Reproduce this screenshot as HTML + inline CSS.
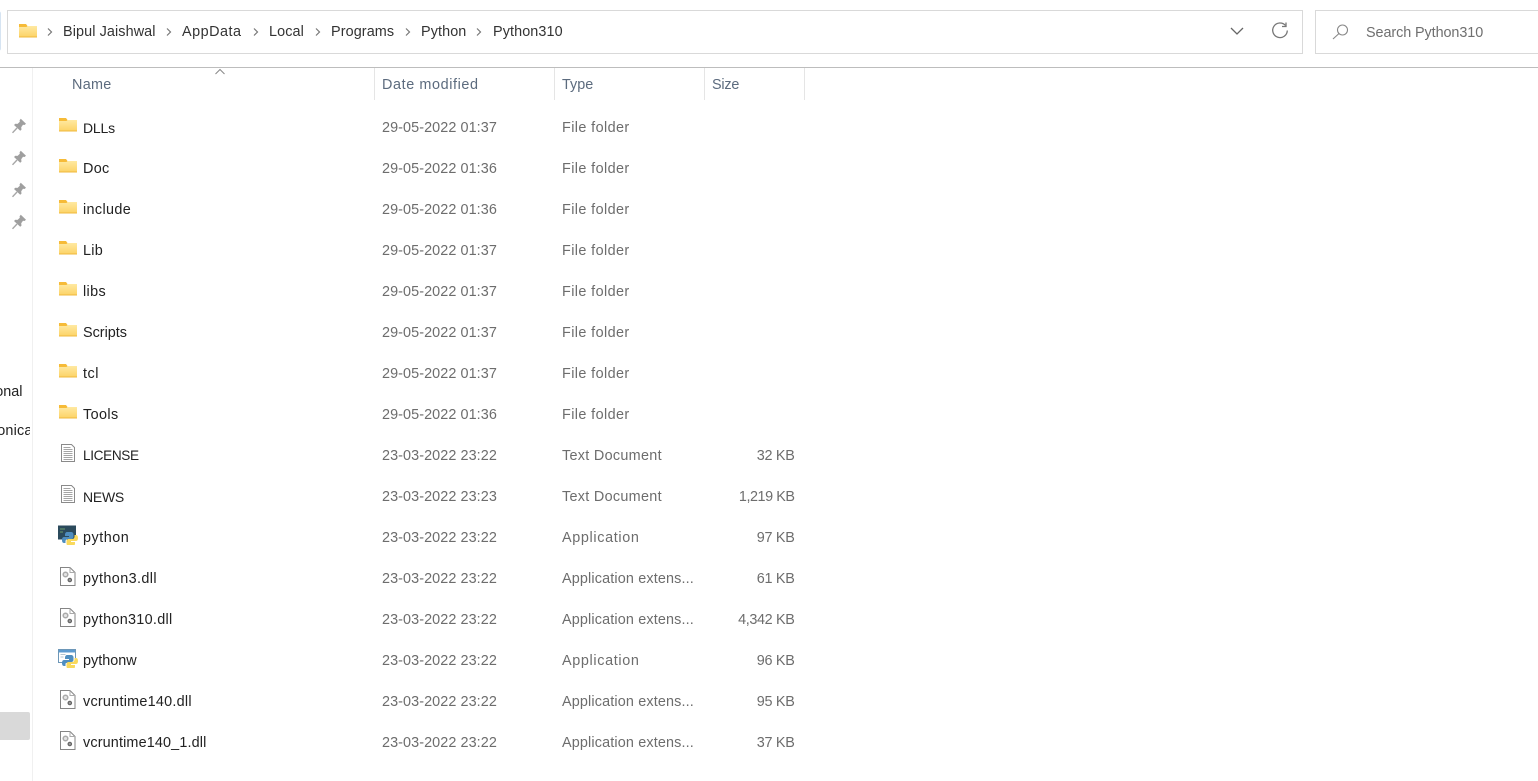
<!DOCTYPE html>
<html><head><meta charset="utf-8">
<style>
html,body{margin:0;padding:0;background:#fff;width:1538px;height:781px;overflow:hidden}
body{position:relative;font-family:"Liberation Sans",sans-serif;font-size:14.4px;color:#1b1b1b}
.a{position:absolute;white-space:nowrap;line-height:18px}
.n{left:83px;color:#222;margin-top:1px}
.d{left:382px;color:#6d6d6d;letter-spacing:.08px;margin-top:1px}
.t{left:562px;color:#6d6d6d;margin-top:1px}
.ff{letter-spacing:.4px}.td{letter-spacing:.3px}.ap{letter-spacing:.65px}.ae{letter-spacing:.15px}
.s{right:743.500px;color:#6d6d6d;letter-spacing:-.3px;margin-top:1px}
.h{top:76px;color:#5c6b7e;letter-spacing:.3px}
.b{top:23px;color:#333;letter-spacing:.1px}
.v{position:absolute;top:68px;width:1px;height:32px;background:#e5e5e5}
svg{position:absolute;overflow:visible}
.i{left:58px;width:20px;height:20px}
</style></head><body>
<svg width="0" height="0" style="left:0;top:0">
<defs>
<linearGradient id="fg" x1="0" y1="0" x2="0" y2="1"><stop offset="0" stop-color="#ffe9a2"/><stop offset="1" stop-color="#fcd264"/></linearGradient>
<symbol id="folder" viewBox="0 0 20 20"><path d="M1 3h7l1.500 2H19V16.500H1z" fill="#f6bb38"/><path d="M1 6H8.500l1-1H19V16.500H1z" fill="url(#fg)"/><path d="M1 15.500h18v1H1z" fill="#efb83c"/></symbol>
<symbol id="txt" viewBox="0 0 20 20"><path d="M3.500 1.500h10l3 3V18.500H3.500z" fill="#fff" stroke="#8a8a8a"/><path d="M5.500 4.500h7M5.500 6.500h9M5.500 8.500h9M5.500 10.500h9M5.500 12.500h9M5.500 14.500h9M5.500 16.500h9" stroke="#a5a5a5" stroke-width="1"/></symbol>
<symbol id="dll" viewBox="0 0 20 20"><path d="M2.500 1.500h9.500l5 5V19.500H2.500z" fill="#fff" stroke="#858585"/><path d="M12 1.500V6.500h5" fill="none" stroke="#aaa"/><circle cx="7.500" cy="8.500" r="2.300" fill="#e4e4e4" stroke="#aaa" stroke-width="1.500"/><circle cx="11.800" cy="14" r="1.700" fill="#999" stroke="#666" stroke-width="1.200"/></symbol>
<symbol id="py" viewBox="0 0 20 20"><path d="M0 .5h18v14H0z" fill="#2b4a5c"/><path d="M2 4h5M2 7h3" stroke="#6d9d6d" stroke-width="1"/><path d="M9 7h4c1.500 0 2.500 1 2.500 2.500V12c0 1-1 2-2 2H10c-1.500 0-2.500 1-2.500 2.500V18H6c-1.500 0-2-1.500-2-3s.5-3 2-3h5v-1H7V9.500C7 8 8 7 9 7z" fill="#4f8ec0"/><path transform="rotate(180 12 14)" d="M9 7h4c1.500 0 2.500 1 2.500 2.500V12c0 1-1 2-2 2H10c-1.500 0-2.500 1-2.500 2.500V18H6c-1.500 0-2-1.500-2-3s.5-3 2-3h5v-1H7V9.500C7 8 8 7 9 7z" fill="#f9d95c"/></symbol>
<symbol id="pyw" viewBox="0 0 20 20"><path d="M.5 1.500h17v13H.5z" fill="#fff" stroke="#6d97b8"/><path d="M1 2h16v2.500H1z" fill="#5d9bd0"/><path d="M2.500 6.500h5M2.500 9h3" stroke="#b5c5d0" stroke-width="1"/><path d="M9 7h4c1.500 0 2.500 1 2.500 2.500V12c0 1-1 2-2 2H10c-1.500 0-2.500 1-2.500 2.500V18H6c-1.500 0-2-1.500-2-3s.5-3 2-3h5v-1H7V9.500C7 8 8 7 9 7z" fill="#4f8ec0"/><path transform="rotate(180 12 14)" d="M9 7h4c1.500 0 2.500 1 2.500 2.500V12c0 1-1 2-2 2H10c-1.500 0-2.500 1-2.500 2.500V18H6c-1.500 0-2-1.500-2-3s.5-3 2-3h5v-1H7V9.500C7 8 8 7 9 7z" fill="#f9d95c"/></symbol>
<symbol id="pin" viewBox="0 0 16 16"><path d="M9.800 .8L15 5.800 13.500 7l-1.500-.2-1.800 2.500.3 2.300-1.300 1.200L3 7l1.300-1.300 2.300.2 2.200-2.100-.2-1.500z" fill="#9f9f9f"/><path d="M6 10L1.500 14.800" stroke="#a6a6a6" stroke-width="1.400"/></symbol>
<symbol id="chev" viewBox="0 0 8 12"><path d="M2 2.500l3.500 3.500-3.500 3.500" fill="none" stroke="#777" stroke-width="1.200"/></symbol>
</defs></svg>

<!-- Address bar -->
<div style="position:absolute;left:-4px;top:11px;width:5px;height:40px;border:1px solid #d6e4f2;border-radius:3px;box-sizing:border-box"></div>
<div style="position:absolute;left:7px;top:10px;width:1296px;height:44px;border:1px solid #d9d9d9;box-sizing:border-box"></div>
<div style="position:absolute;left:1315px;top:10px;width:240px;height:44px;border:1px solid #d9d9d9;box-sizing:border-box"></div>
<div style="position:absolute;left:0;top:67px;width:1538px;height:1px;background:#bdbdbd"></div>

<svg style="left:18px;top:21px;width:20px;height:20px"><use href="#folder" width="20" height="20"/></svg>
<svg style="left:46px;top:26px;width:8px;height:12px"><use href="#chev" width="8" height="12"/></svg>
<div class="a b" style="left:63px">Bipul Jaishwal</div>
<svg style="left:165px;top:26px;width:8px;height:12px"><use href="#chev" width="8" height="12"/></svg>
<div class="a b" style="left:182px;letter-spacing:.5px">AppData</div>
<svg style="left:252px;top:26px;width:8px;height:12px"><use href="#chev" width="8" height="12"/></svg>
<div class="a b" style="left:269px">Local</div>
<svg style="left:314px;top:26px;width:8px;height:12px"><use href="#chev" width="8" height="12"/></svg>
<div class="a b" style="left:331px">Programs</div>
<svg style="left:404px;top:26px;width:8px;height:12px"><use href="#chev" width="8" height="12"/></svg>
<div class="a b" style="left:421px">Python</div>
<svg style="left:475px;top:26px;width:8px;height:12px"><use href="#chev" width="8" height="12"/></svg>
<div class="a b" style="left:493px">Python310</div>

<svg style="left:1229px;top:25px;width:16px;height:12px"><path d="M2 3l6 6 6-6" fill="none" stroke="#666" stroke-width="1.300"/></svg>
<svg style="left:1271px;top:22px;width:18px;height:18px"><path d="M14.500 3.500A7.300 7.300 0 1 0 16.300 8.500" fill="none" stroke="#777" stroke-width="1.300"/><path d="M15 .5V4.500H11" fill="none" stroke="#777" stroke-width="1.300"/></svg>
<svg style="left:1332px;top:23px;width:18px;height:18px"><circle cx="10.500" cy="7" r="5" fill="none" stroke="#888" stroke-width="1.100"/><path d="M7 10.500L1 16" stroke="#888" stroke-width="1.100"/></svg>
<div class="a" style="left:1366px;top:24px;color:#6f6f6f;letter-spacing:-.08px">Search Python310</div>

<!-- Left pane -->
<div style="position:absolute;left:32px;top:68px;width:1px;height:713px;background:#f0f0f0"></div>
<svg style="left:11px;top:118px;width:16px;height:16px"><use href="#pin" width="16" height="16"/></svg>
<svg style="left:11px;top:150px;width:16px;height:16px"><use href="#pin" width="16" height="16"/></svg>
<svg style="left:11px;top:182px;width:16px;height:16px"><use href="#pin" width="16" height="16"/></svg>
<svg style="left:11px;top:214px;width:16px;height:16px"><use href="#pin" width="16" height="16"/></svg>
<div class="a" style="left:-8px;top:383px;color:#222">ional</div>
<div style="position:absolute;left:0;top:422px;width:30px;height:20px;overflow:hidden"><div class="a" style="left:-12px;top:0;color:#222;letter-spacing:.2px">tronica</div></div>
<div style="position:absolute;left:0;top:712px;width:30px;height:28px;background:#d9d9d9;border-radius:0 2px 2px 0"></div>

<!-- Header -->
<div class="a h" style="left:72px">Name</div>
<svg style="left:214px;top:68px;width:12px;height:7px"><path d="M1.500 6L6 1.500 10.500 6" fill="none" stroke="#888" stroke-width="1"/></svg>
<div class="v" style="left:374px"></div>
<div class="a h" style="left:382px;letter-spacing:.6px">Date modified</div>
<div class="v" style="left:554px"></div>
<div class="a h" style="left:562px;letter-spacing:0">Type</div>
<div class="v" style="left:704px"></div>
<div class="a h" style="left:712px;letter-spacing:-.2px">Size</div>
<div class="v" style="left:804px"></div>

<!-- Rows -->
<svg class="i" style="top:115px"><use href="#folder" width="20" height="20"/></svg><div class="a n" style="top:118px;font-size:14px;letter-spacing:-.2px">DLLs</div><div class="a d" style="top:118px">29-05-2022 01:37</div><div class="a t ff" style="top:118px">File folder</div>
<svg class="i" style="top:156px"><use href="#folder" width="20" height="20"/></svg><div class="a n" style="top:159px;letter-spacing:.3px">Doc</div><div class="a d" style="top:159px">29-05-2022 01:36</div><div class="a t ff" style="top:159px">File folder</div>
<svg class="i" style="top:197px"><use href="#folder" width="20" height="20"/></svg><div class="a n" style="top:200px;letter-spacing:.35px">include</div><div class="a d" style="top:200px">29-05-2022 01:36</div><div class="a t ff" style="top:200px">File folder</div>
<svg class="i" style="top:238px"><use href="#folder" width="20" height="20"/></svg><div class="a n" style="top:241px;letter-spacing:.3px">Lib</div><div class="a d" style="top:241px">29-05-2022 01:37</div><div class="a t ff" style="top:241px">File folder</div>
<svg class="i" style="top:279px"><use href="#folder" width="20" height="20"/></svg><div class="a n" style="top:282px;letter-spacing:.35px">libs</div><div class="a d" style="top:282px">29-05-2022 01:37</div><div class="a t ff" style="top:282px">File folder</div>
<svg class="i" style="top:320px"><use href="#folder" width="20" height="20"/></svg><div class="a n" style="top:323px">Scripts</div><div class="a d" style="top:323px">29-05-2022 01:37</div><div class="a t ff" style="top:323px">File folder</div>
<svg class="i" style="top:361px"><use href="#folder" width="20" height="20"/></svg><div class="a n" style="top:364px;letter-spacing:.5px">tcl</div><div class="a d" style="top:364px">29-05-2022 01:37</div><div class="a t ff" style="top:364px">File folder</div>
<svg class="i" style="top:402px"><use href="#folder" width="20" height="20"/></svg><div class="a n" style="top:405px;letter-spacing:.4px">Tools</div><div class="a d" style="top:405px">29-05-2022 01:36</div><div class="a t ff" style="top:405px">File folder</div>
<svg class="i" style="top:443px"><use href="#txt" width="20" height="20"/></svg><div class="a n" style="top:446px;font-size:13.6px;letter-spacing:-.35px">LICENSE</div><div class="a d" style="top:446px">23-03-2022 23:22</div><div class="a t td" style="top:446px">Text Document</div><div class="a s" style="top:446px">32 KB</div>
<svg class="i" style="top:484px"><use href="#txt" width="20" height="20"/></svg><div class="a n" style="top:487px;font-size:14px;letter-spacing:-.25px">NEWS</div><div class="a d" style="top:487px">23-03-2022 23:23</div><div class="a t td" style="top:487px">Text Document</div><div class="a s" style="top:487px;letter-spacing:-.45px">1,219 KB</div>
<svg class="i" style="top:525px"><use href="#py" width="20" height="20"/></svg><div class="a n" style="top:528px;letter-spacing:.5px">python</div><div class="a d" style="top:528px">23-03-2022 23:22</div><div class="a t ap" style="top:528px">Application</div><div class="a s" style="top:528px">97 KB</div>
<svg class="i" style="top:566px"><use href="#dll" width="20" height="20"/></svg><div class="a n" style="top:569px;letter-spacing:.4px">python3.dll</div><div class="a d" style="top:569px">23-03-2022 23:22</div><div class="a t ae" style="top:569px">Application extens...</div><div class="a s" style="top:569px">61 KB</div>
<svg class="i" style="top:607px"><use href="#dll" width="20" height="20"/></svg><div class="a n" style="top:610px;letter-spacing:.3px">python310.dll</div><div class="a d" style="top:610px">23-03-2022 23:22</div><div class="a t ae" style="top:610px">Application extens...</div><div class="a s" style="top:610px;letter-spacing:-.35px">4,342 KB</div>
<svg class="i" style="top:648px"><use href="#pyw" width="20" height="20"/></svg><div class="a n" style="top:651px">pythonw</div><div class="a d" style="top:651px">23-03-2022 23:22</div><div class="a t ap" style="top:651px">Application</div><div class="a s" style="top:651px">96 KB</div>
<svg class="i" style="top:689px"><use href="#dll" width="20" height="20"/></svg><div class="a n" style="top:692px;letter-spacing:.25px">vcruntime140.dll</div><div class="a d" style="top:692px">23-03-2022 23:22</div><div class="a t ae" style="top:692px">Application extens...</div><div class="a s" style="top:692px">95 KB</div>
<svg class="i" style="top:730px"><use href="#dll" width="20" height="20"/></svg><div class="a n" style="top:733px;letter-spacing:.15px">vcruntime140_1.dll</div><div class="a d" style="top:733px">23-03-2022 23:22</div><div class="a t ae" style="top:733px">Application extens...</div><div class="a s" style="top:733px">37 KB</div>
</body></html>
